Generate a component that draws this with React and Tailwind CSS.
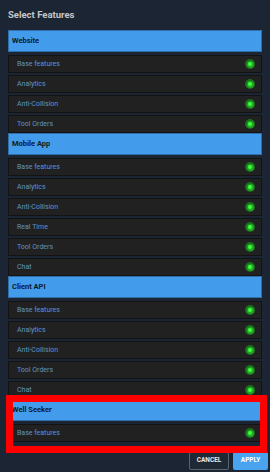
const SECTIONS = [
  { name: 'Website', features: ['Base features', 'Analytics', 'Anti-Collision', 'Tool Orders'] },
  { name: 'Mobile App', features: ['Base features', 'Analytics', 'Anti-Collision', 'Real Time', 'Tool Orders', 'Chat'] },
  { name: 'Client API', features: ['Base features', 'Analytics', 'Anti-Collision', 'Tool Orders', 'Chat'] },
  { name: 'Well Seeker', features: ['Base features'] },
];

function StatusDot() {
  return (
    <span className="w-[10px] h-[10px] rounded-full bg-[#17701a] flex items-center justify-center">
      <span className="w-[7px] h-[7px] rounded-full bg-[#25a625] flex items-center justify-center">
        <span className="w-[4px] h-[4px] rounded-full bg-[#3cff3c]" />
      </span>
    </span>
  );
}

function FeatureRow({ label, first }) {
  return (
    <div className={`${first ? 'mt-[3px]' : 'mt-[2px]'} h-[18px] bg-[#212121] border border-[#131313] flex items-center justify-between pl-[8px] pr-[6px]`}>
      <span className="text-[7px] text-[#5d95c9]">{label}</span>
      <StatusDot />
    </div>
  );
}

export default function App() {
  return (
    <div className="w-[273px] h-[475px] bg-white" style={{ fontFamily: 'Roboto, "Liberation Sans", sans-serif' }}>
      <div className="relative w-[270px] h-[472px] bg-[#1b2533] px-[8px] flex flex-col">
        <div className="h-[30px] flex items-center">
          <h1 className="text-[9.5px] font-bold text-[#c4c6c9]">Select Features</h1>
        </div>

        {SECTIONS.map((section) => (
          <div key={section.name}>
            <div className="h-[22px] bg-[#439ceb] border border-[#2f6ea8] flex items-center pl-[3px]">
              <span className="text-[7.5px] font-bold text-[#0e1a28]">{section.name}</span>
            </div>
            {section.features.map((f, i) => (
              <FeatureRow key={f} label={f} first={i === 0} />
            ))}
          </div>
        ))}

        <div className="mt-auto mb-[2px] -mr-[6px] flex justify-end gap-[4px]">
          <button className="w-[40px] h-[18px] bg-[#1f2935] border border-[#5a6470] rounded-[2px] text-[6.5px] font-bold text-[#e6e6e6]">
            CANCEL
          </button>
          <button className="w-[35px] h-[18px] bg-[#4aa3ee] rounded-[2px] text-[6.5px] font-bold text-white">
            APPLY
          </button>
        </div>

        {/* annotation box */}
        <div className="absolute left-[6px] top-[395px] w-[261px] h-[58px] border-[7px] border-[#ff0000] pointer-events-none" />
      </div>
    </div>
  );
}
